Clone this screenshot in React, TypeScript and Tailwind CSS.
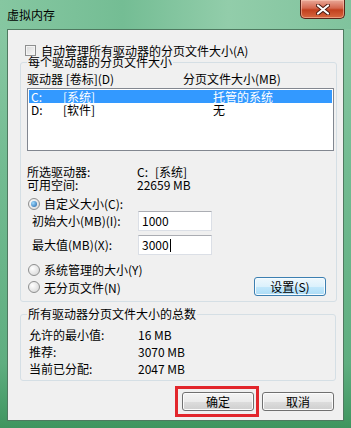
import type { ReactNode } from "react";

function Checkbox() {
  return (
    <span className="block h-[11px] w-[11px] shrink-0 border border-[#8e8f8f] bg-[linear-gradient(135deg,#d8d8d8,#f8f8f8)] shadow-[inset_0_0_0_1px_#f4f4f4]" />
  );
}

function Radio({ checked }: { checked?: boolean }) {
  return (
    <span className="grid h-[12px] w-[12px] shrink-0 place-items-center rounded-full border border-[#8e8f8f] bg-[radial-gradient(circle_at_35%_35%,#ffffff,#d2d2d2)]">
      {checked && (
        <span className="h-[6px] w-[6px] rounded-full bg-[radial-gradient(circle_at_35%_35%,#9fdcff,#1d5fa6)]" />
      )}
    </span>
  );
}

function Btn({ children, blue }: { children: ReactNode; blue?: boolean }) {
  return (
    <button
      className={
        blue
          ? "flex h-[19px] w-[72px] items-center justify-center rounded-[3px] border border-[#3c7fb1] bg-[linear-gradient(#eef8fd_0%,#dcf1fc_50%,#c3e8fc_50%,#acdcf6_100%)] shadow-[inset_0_0_0_1px_#f6fbfe] text-[12px] leading-none text-black"
          : "flex h-[19px] w-[72px] items-center justify-center rounded-[3px] border border-[#707070] bg-[linear-gradient(#f4f4f4_0%,#ebebeb_50%,#dddddd_50%,#cfcfcf_100%)] shadow-[inset_0_0_0_1px_#fcfcfc] text-[12px] leading-none text-black"
      }
    >
      {children}
    </button>
  );
}

function Input({ value, caret }: { value: string; caret?: boolean }) {
  return (
    <div className="flex h-[20px] w-[74px] items-center border border-[#dbdfe6] border-t-[#abadb3] bg-white pl-[3px] text-[12px] leading-none">
      {value}
      {caret && <span className="ml-[1px] h-[13px] w-px bg-black" />}
    </div>
  );
}

export default function App() {
  return (
    <div className="relative flex h-[428px] w-[351px] flex-col overflow-hidden bg-[linear-gradient(#8ccaa6,#72bb91_40%,#5fae80_85%,#3f955f)] font-['Noto_Sans_CJK_SC',sans-serif] text-[12px] text-black">
      {/* title bar */}
      <div className="flex h-[29px] items-center bg-[linear-gradient(90deg,#86c7a1,#74bd94_35%,#92cdaa_65%,#80c39d)] pl-[7px] text-[12px]">
        虚拟内存
      </div>
      <div className="absolute right-[6px] top-0 flex h-[19px] w-[45px] items-center justify-center rounded-b-[5px] border border-t-0 border-[#5a2419] bg-[linear-gradient(#e9a898,#d4674e_45%,#c2401e_55%,#d7683f)] shadow-[inset_0_0_0_1px_rgba(255,210,190,0.5)]">
        <svg width="14" height="11" viewBox="0 0 14 11">
          <path d="M2 1.5 L12 9.5 M12 1.5 L2 9.5" stroke="#4a1a10" strokeWidth="4" strokeLinecap="round" />
          <path d="M2 1.5 L12 9.5 M12 1.5 L2 9.5" stroke="#ffffff" strokeWidth="2.2" strokeLinecap="round" />
        </svg>
      </div>

      {/* client */}
      <div className="mx-[7px] flex h-[392px] flex-col border border-[#4f7a60] bg-[#f0f0f0] pt-[14px]">
        <div className="flex h-[13px] items-center gap-[5px] pl-[17px] leading-[13px]">
          <Checkbox />
          <span>自动管理所有驱动器的分页文件大小(A)</span>
        </div>

        <fieldset className="-mt-[2px] ml-[12px] w-[316px] rounded-[3px] border border-[#d5dfe5] pb-[5px] pl-[6px] pr-[2px]">
          <legend className="px-[1px] leading-[14px]">每个驱动器的分页文件大小</legend>
          <div className="mt-[2px] flex h-[16px] items-center leading-[16px]">
            <span className="w-[156px]">驱动器 [卷标](D)</span>
            <span>分页文件大小(MB)</span>
          </div>
          <div className="mt-[1px] h-[63px] w-[307px] border border-[#828790] bg-white p-px">
            <div className="flex h-[13px] items-center bg-[#3399ff] pl-[2px] leading-[13px] text-white">
              <span className="w-[32px]">C:</span>
              <span className="w-[150px]">[系统]</span>
              <span>托管的系统</span>
            </div>
            <div className="flex h-[13px] items-center pl-[2px] leading-[13px]">
              <span className="w-[32px]">D:</span>
              <span className="w-[150px]">[软件]</span>
              <span>无</span>
            </div>
          </div>

          <div className="mt-[14px] flex h-[13px] items-center leading-[13px]">
            <span className="w-[110px]">所选驱动器:</span>
            <span className="w-[18px]">C:</span>
            <span>[系统]</span>
          </div>
          <div className="flex h-[13px] items-center leading-[13px]">
            <span className="w-[110px]">可用空间:</span>
            <span>22659 MB</span>
          </div>

          <div className="mt-[6px] flex h-[14px] items-center gap-[4px] pl-px">
            <Radio checked />
            <span>自定义大小(C):</span>
          </div>
          <div className="flex h-[20px] items-center pl-[5px]">
            <span className="w-[106px]">初始大小(MB)(I):</span>
            <Input value="1000" />
          </div>
          <div className="mt-[4px] flex h-[20px] items-center pl-[5px]">
            <span className="w-[106px]">最大值(MB)(X):</span>
            <Input value="3000" caret />
          </div>
          <div className="mt-[8px] flex h-[14px] items-center gap-[4px] pl-px">
            <Radio />
            <span>系统管理的大小(Y)</span>
          </div>
          <div className="flex h-[19px] items-center gap-[4px] pl-px">
            <Radio />
            <span className="mt-[2px]">无分页文件(N)</span>
            <div className="ml-auto mr-[8px]">
              <Btn blue>设置(S)</Btn>
            </div>
          </div>
        </fieldset>

        <fieldset className="ml-[12px] mt-[5px] w-[316px] rounded-[3px] border border-[#d5dfe5] pb-[3px] pl-[8px]">
          <legend className="-ml-[2px] px-[1px] leading-[14px]">所有驱动器分页文件大小的总数</legend>
          <div className="mt-[5px] flex h-[17px] items-center leading-[17px]">
            <span className="w-[109px]">允许的最小值:</span>
            <span>16 MB</span>
          </div>
          <div className="flex h-[17px] items-center leading-[17px]">
            <span className="w-[109px]">推荐:</span>
            <span>3070 MB</span>
          </div>
          <div className="flex h-[17px] items-center leading-[17px]">
            <span className="w-[109px]">当前已分配:</span>
            <span>2047 MB</span>
          </div>
        </fieldset>

        <div className="mt-[11px] flex justify-end gap-[8px] pr-[9px]">
          <div className="relative">
            <Btn>确定</Btn>
            <span className="pointer-events-none absolute -bottom-[6px] -left-[7px] -right-[5px] -top-[6px] border-[3px] border-[#e2262c]" />
          </div>
          <Btn>取消</Btn>
        </div>
      </div>
    </div>
  );
}
